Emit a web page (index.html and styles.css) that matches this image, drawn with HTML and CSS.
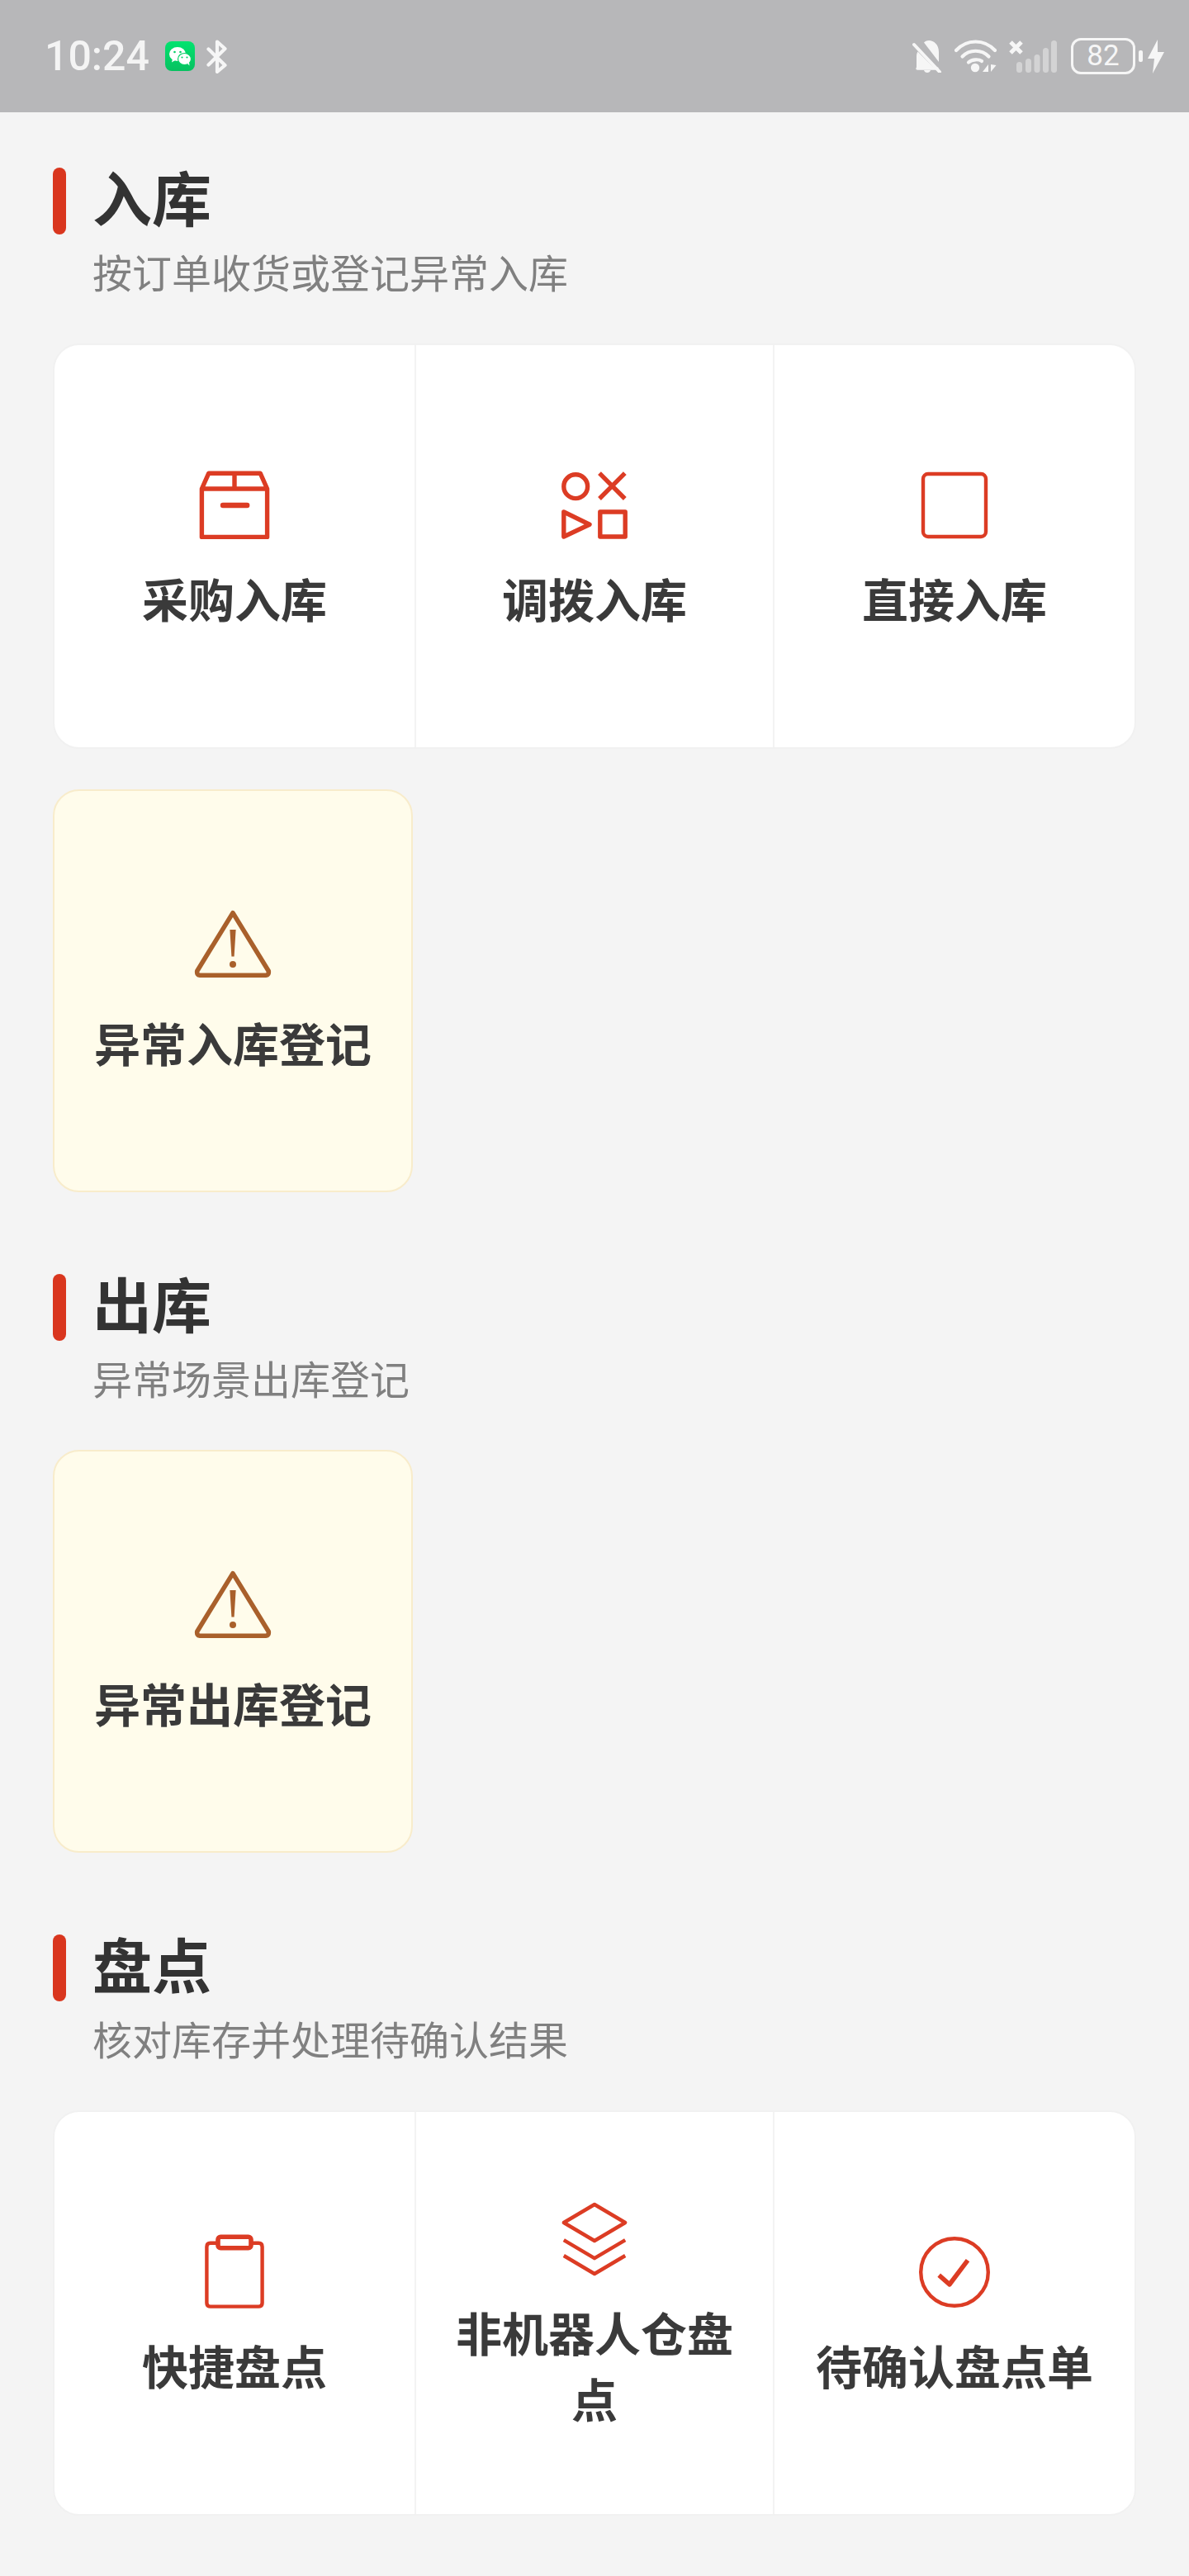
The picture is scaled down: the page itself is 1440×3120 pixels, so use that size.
FILE: index.html
```html
<!DOCTYPE html>
<html lang="zh-CN">
<head>
    <meta charset="utf-8">
    <title>仓库作业</title>
    <link rel="stylesheet" href="styles.css">
</head>
<body>
    <div class="status-bar">
        <div class="status-left">
            <span class="status-time">10:24</span>
            <svg class="icon-wechat" viewBox="0 0 36 36">
                <defs>
                    <linearGradient id="wechatGreen" x1="0" y1="0" x2="0" y2="1">
                        <stop offset="0" stop-color="#02e36f"/>
                        <stop offset="1" stop-color="#07c160"/>
                    </linearGradient>
                </defs>
                <rect width="36" height="36" rx="8" fill="url(#wechatGreen)"/>
                <ellipse cx="15" cy="15.500" rx="10" ry="8.500" fill="#fff"/>
                <path d="M9 21l-1 4.500 5-3z" fill="#fff"/>
                <ellipse cx="23.500" cy="21.500" rx="8" ry="7" fill="#fff" stroke="#06cf66" stroke-width="1.200"/>
                <path d="M27 27l2.500 2.500-.5-4z" fill="#fff"/>
                <circle cx="11.500" cy="13" r="1.300" fill="#06cf66"/>
                <circle cx="18.500" cy="13" r="1.300" fill="#06cf66"/>
                <circle cx="20.500" cy="19.500" r="1.100" fill="#06cf66"/>
                <circle cx="26.500" cy="19.500" r="1.100" fill="#06cf66"/>
            </svg>
            <svg class="icon-bt" viewBox="0 0 25 41" fill="none" stroke="#f6f6f6" stroke-width="4.200" stroke-linecap="round" stroke-linejoin="round">
                <path d="M2.500 11.500l20 19.500-9.500 8V2.500l9.500 8.500-20 19.500"/>
            </svg>
        </div>
        <div class="status-right">
            <svg class="icon-bell" viewBox="0 0 36 40">
                <path d="M6 35h24" stroke="#f6f6f6" stroke-width="3.500" stroke-linecap="round"/>
                <path d="M5 34V20c0-2 .5-4 1.500-5.500L26 34zM14 3.500C15.500 2 17 1 20 1c6 0 12 5 12 14v12z" fill="#f6f6f6"/>
                <path d="M14 37h8c-.5 2-2 3-4 3s-3.500-1-4-3z" fill="#f6f6f6"/>
                <path d="M2 6l31 33" stroke="#f6f6f6" stroke-width="4" stroke-linecap="round"/>
            </svg>
            <svg class="icon-wifi" viewBox="0 0 51 40" fill="none" stroke="#f6f6f6" stroke-width="4.200" stroke-linecap="round">
                <path d="M2 13C15 -1 36 -1 49 13"/>
                <path d="M9.500 20.500C18 11.500 33 11.500 41.500 20.500"/>
                <path d="M17 27.500C21.500 23.500 29.500 23.500 33 26"/>
                <circle cx="25" cy="34" r="5.200" fill="#f6f6f6" stroke="none"/>
                <path d="M41 30v9h-7zM44 30v9l6.500-8z" fill="#f6f6f6" stroke="none"/>
            </svg>
            <svg class="icon-signal" viewBox="0 0 58 40">
                <path d="M2 3l13 13M15 3L2 16" stroke="#f6f6f6" stroke-width="5"/>
                <g fill="#f6f6f6" fill-opacity=".45">
                    <rect x="9" y="27" width="7" height="13" rx="3.500"/>
                    <rect x="20" y="23" width="7" height="17" rx="3.500"/>
                    <rect x="30.500" y="18" width="7" height="22" rx="3.500"/>
                    <rect x="41" y="10" width="7" height="30" rx="3.500"/>
                    <rect x="51" y="1" width="7" height="39" rx="3.500"/>
                </g>
            </svg>
            <div class="battery">
                <span class="battery-level">82</span>
                <span class="battery-nub"></span>
            </div>
            <svg class="icon-bolt" viewBox="0 0 20 41">
                <path d="M12 0L0 23h8L6 41 20 15h-8z" fill="#f6f6f6"/>
            </svg>
        </div>
    </div>

    <div class="page">
        <section class="section">
            <div class="section-header">
                <span class="section-bar"></span>
                <div>
                    <h2 class="section-title">入库</h2>
                    <p class="section-desc">按订单收货或登记异常入库</p>
                </div>
            </div>
            <div class="action-grid">
                <div class="action-cell">
                    <svg class="action-icon" viewBox="0 0 24 24">
                        <path d="M2.100 7L4.200 2.300H19.800L21.900 7V21.600H2.100zM2.100 7H21.900M12 2.300V7"/>
                        <path d="M8.500 12H15.800" stroke-width="1.600" stroke-linecap="round"/>
                    </svg>
                    <span class="action-label">采购入库</span>
                </div>
                <div class="action-cell">
                    <svg class="action-icon" viewBox="0 0 24 24">
                        <circle cx="6.300" cy="6.300" r="3.600"/>
                        <path d="M13.500 2.300L21.200 10M21.200 2.300L13.500 10"/>
                        <path d="M2.700 14L10.500 17.800L2.700 21.500z"/>
                        <rect x="13.700" y="14" width="7.600" height="7.500"/>
                    </svg>
                    <span class="action-label">调拨入库</span>
                </div>
                <div class="action-cell">
                    <svg class="action-icon icon-thin" viewBox="0 0 24 24">
                        <rect x="2.500" y="2.500" width="19" height="19" rx="1.500"/>
                    </svg>
                    <span class="action-label">直接入库</span>
                </div>
            </div>
            <div class="warning-card card-after-grid">
                <svg class="action-icon icon-warning" viewBox="0 0 24 24">
                    <path d="M12 .9L22.800 18.500Q23 19.700 22 19.800H2Q1 19.700 1.200 18.500z"/>
                    <path class="icon-fill" d="M11.100 6H12.900L12.400 14.100H11.600z"/>
                    <circle class="icon-fill" cx="12" cy="16.500" r="1"/>
                </svg>
                <span class="action-label">异常入库登记</span>
            </div>
        </section>

        <section class="section">
            <div class="section-header">
                <span class="section-bar"></span>
                <div>
                    <h2 class="section-title">出库</h2>
                    <p class="section-desc">异常场景出库登记</p>
                </div>
            </div>
            <div class="warning-card">
                <svg class="action-icon icon-warning" viewBox="0 0 24 24">
                    <path d="M12 .9L22.800 18.500Q23 19.700 22 19.800H2Q1 19.700 1.200 18.500z"/>
                    <path class="icon-fill" d="M11.100 6H12.900L12.400 14.100H11.600z"/>
                    <circle class="icon-fill" cx="12" cy="16.500" r="1"/>
                </svg>
                <span class="action-label">异常出库登记</span>
            </div>
        </section>

        <section class="section section-stock">
            <div class="section-header">
                <span class="section-bar"></span>
                <div>
                    <h2 class="section-title">盘点</h2>
                    <p class="section-desc">核对库存并处理待确认结果</p>
                </div>
            </div>
            <div class="action-grid">
                <div class="action-cell">
                    <svg class="action-icon icon-thin" viewBox="0 0 24 24">
                        <path d="M7 3.200H4.700Q3.600 3.200 3.600 4.300V21.300Q3.600 22.400 4.700 22.400H19.300Q20.400 22.400 20.400 21.300V4.300Q20.400 3.200 19.300 3.200H17"/>
                        <rect x="7" y="1.300" width="10" height="3.400" rx=".8" stroke-width="1.400"/>
                    </svg>
                    <span class="action-label">快捷盘点</span>
                </div>
                <div class="action-cell">
                    <svg class="action-icon icon-thin" viewBox="0 0 24 24">
                        <path d="M12 1.500L21.300 7L12 12.500L2.700 7z"/>
                        <path d="M2.700 12.300L12 17.800L21.300 12.300M2.700 17L12 22.500L21.300 17"/>
                    </svg>
                    <span class="action-label">非机器人仓盘点</span>
                </div>
                <div class="action-cell">
                    <svg class="action-icon icon-thin" viewBox="0 0 24 24">
                        <circle cx="12" cy="12" r="10.200"/>
                        <path d="M7.300 12.900L10.500 15.700L16 8.400" stroke-width="1.400"/>
                    </svg>
                    <span class="action-label">待确认盘点单</span>
                </div>
            </div>
        </section>
    </div>
</body>
</html>
```

FILE: styles.css
```css
* {
    margin: 0;
    padding: 0;
    box-sizing: border-box;
}

body {
    background: #f4f4f4;
    font-family: "Noto Sans CJK SC", "Noto Sans", sans-serif;
}

/* Status bar */
.status-bar {
    height: 136px;
    padding: 0 30px 0 54px;
    background: #b7b7b9;
    display: flex;
    align-items: center;
    justify-content: space-between;
}

.status-left {
    display: flex;
    align-items: center;
}

.status-time {
    font-family: Roboto, sans-serif;
    font-size: 50px;
    font-weight: 500;
    line-height: 60px;
    color: #f4f4f4;
}

.icon-wechat {
    width: 36px;
    height: 36px;
    margin-left: 19px;
}

.icon-bt {
    width: 25px;
    height: 41px;
    margin-left: 14px;
}

.status-right {
    display: flex;
    align-items: center;
}

.icon-bell {
    width: 36px;
    height: 40px;
}

.icon-wifi {
    width: 51px;
    height: 40px;
    margin-left: 15px;
}

.icon-signal {
    width: 58px;
    height: 40px;
    margin-left: 15px;
}

.battery {
    position: relative;
    width: 78px;
    height: 44px;
    margin-left: 17px;
    border: 3px solid #f6f6f6;
    border-radius: 12px;
    display: flex;
    align-items: center;
    justify-content: center;
}

.battery-level {
    font-family: Roboto, sans-serif;
    font-size: 35px;
    line-height: 38px;
    color: #f6f6f6;
}

.battery-nub {
    position: absolute;
    right: -12px;
    top: 12px;
    width: 5px;
    height: 14px;
    background: #f6f6f6;
    border-radius: 2px;
}

.icon-bolt {
    width: 20px;
    height: 41px;
    margin-left: 15px;
}

/* Sections */
.page {
    padding: 67px 64px 0;
    filter: blur(0.6px);
}

.section {
    margin-bottom: 99px;
}

.section-header {
    display: flex;
    gap: 32px;
    height: 213px;
}

.section-bar {
    flex: none;
    width: 16px;
    height: 81px;
    background: #d9361e;
    border-radius: 8px;
}

.section-title {
    font-size: 72px;
    line-height: 68px;
    font-weight: 700;
    color: #333;
}

.section-desc {
    margin-top: 24px;
    font-size: 48px;
    line-height: 66px;
    color: #808080;
}

.section-stock {
    margin-bottom: 0;
}

/* Action cards */
.action-grid {
    display: grid;
    grid-template-columns: 438px 434px 1fr;
    background: #fff;
    border: 2px solid #f1f1f1;
    border-radius: 32px;
}

.action-cell {
    height: 487px;
    padding: 4px 24px 0;
    border-right: 2px solid #f3f3f3;
    display: flex;
    flex-direction: column;
    align-items: center;
    justify-content: center;
    gap: 24px;
}

.action-cell:last-child {
    border-right: none;
}

.warning-card {
    width: 436px;
    height: 488px;
    padding: 4px 24px 0;
    background: #fffceb;
    border: 2px solid #f8eccb;
    border-radius: 32px;
    display: flex;
    flex-direction: column;
    align-items: center;
    justify-content: center;
    gap: 24px;
}

.card-after-grid {
    margin-top: 49px;
}

.action-icon {
    flex: none;
    width: 96px;
    height: 96px;
    fill: none;
    stroke: #dc3c24;
    stroke-width: 1.350;
    stroke-linejoin: round;
    overflow: visible;
}

.icon-thin {
    stroke-width: 1.100;
}

.icon-warning {
    stroke: #a9602b;
    stroke-width: 1.400;
}

.icon-fill {
    fill: #a9602b;
    stroke: none;
}

.action-label {
    font-size: 56px;
    line-height: 80px;
    font-weight: 700;
    color: #3a3a3a;
    text-align: center;
}
```
